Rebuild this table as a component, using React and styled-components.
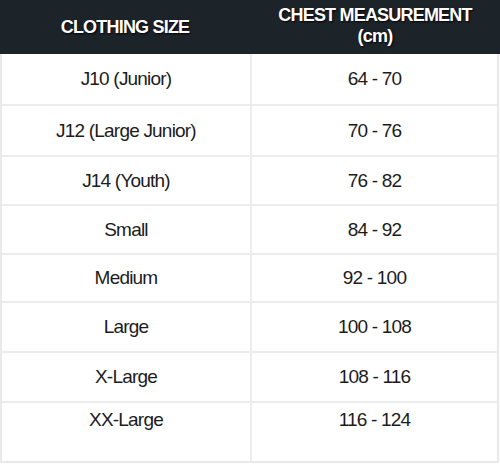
import React from "react";
import styled, { createGlobalStyle } from "styled-components";

const Global = createGlobalStyle`
  html, body { margin: 0; padding: 0; background: #ffffff; }
  body { font-family: "Liberation Sans", Arial, sans-serif; }
`;

const Table = styled.div`
  width: 500px;
  display: flex;
  flex-direction: column;
`;

const HeaderRow = styled.div`
  display: grid;
  grid-template-columns: 250px 250px;
  height: 54px;
  background: #1c2329;
`;

const HeadCell = styled.div`
  display: flex;
  align-items: center;
  justify-content: center;
  text-align: center;
  color: #ffffff;
  font-weight: 700;
  font-size: 18px;
  line-height: 21px;
  letter-spacing: -0.8px;
  text-shadow: 1px 1px 2px rgba(0, 0, 0, 0.9);
  padding-bottom: ${(p) => (p.$raised ? "3px" : "0")};
`;

const Body = styled.div`
  width: 499px;
  box-sizing: border-box;
  border-left: 2px solid #e9e9e9;
  border-right: 2px solid #e9e9e9;
  border-bottom: 2px solid #e9e9e9;
`;

const Row = styled.div`
  display: grid;
  grid-template-columns: 248px 1fr;
  height: ${(p) => p.$h}px;
  box-sizing: border-box;
  border-bottom: ${(p) => (p.$last ? "none" : "2px solid #ececec")};
`;

const Cell = styled.div`
  display: flex;
  justify-content: center;
  align-items: ${(p) => (p.$top ? "flex-start" : "center")};
  padding-top: ${(p) => (p.$top ? "7px" : "0")};
  color: #1c1c1c;
  font-size: 19px;
  line-height: 20px;
  letter-spacing: -0.8px;
  border-left: ${(p) => (p.$divider ? "2px solid #ececec" : "none")};
`;

const rows = [
  ["J10 (Junior)", "64 - 70", 52],
  ["J12 (Large Junior)", "70 - 76", 51],
  ["J14 (Youth)", "76 - 82", 49],
  ["Small", "84 - 92", 49],
  ["Medium", "92 - 100", 48],
  ["Large", "100 - 108", 50],
  ["X-Large", "108 - 116", 50],
  ["XX-Large", "116 - 124", 58],
];

export default function App() {
  return (
    <>
      <Global />
      <Table>
        <HeaderRow>
          <HeadCell>CLOTHING SIZE</HeadCell>
          <HeadCell $raised>
            CHEST MEASUREMENT
            <br />
            (cm)
          </HeadCell>
        </HeaderRow>
        <Body>
          {rows.map(([size, chest, h], i) => {
            const last = i === rows.length - 1;
            return (
              <Row key={size} $h={h} $last={last}>
                <Cell $top={last}>{size}</Cell>
                <Cell $top={last} $divider>
                  {chest}
                </Cell>
              </Row>
            );
          })}
        </Body>
      </Table>
    </>
  );
}
